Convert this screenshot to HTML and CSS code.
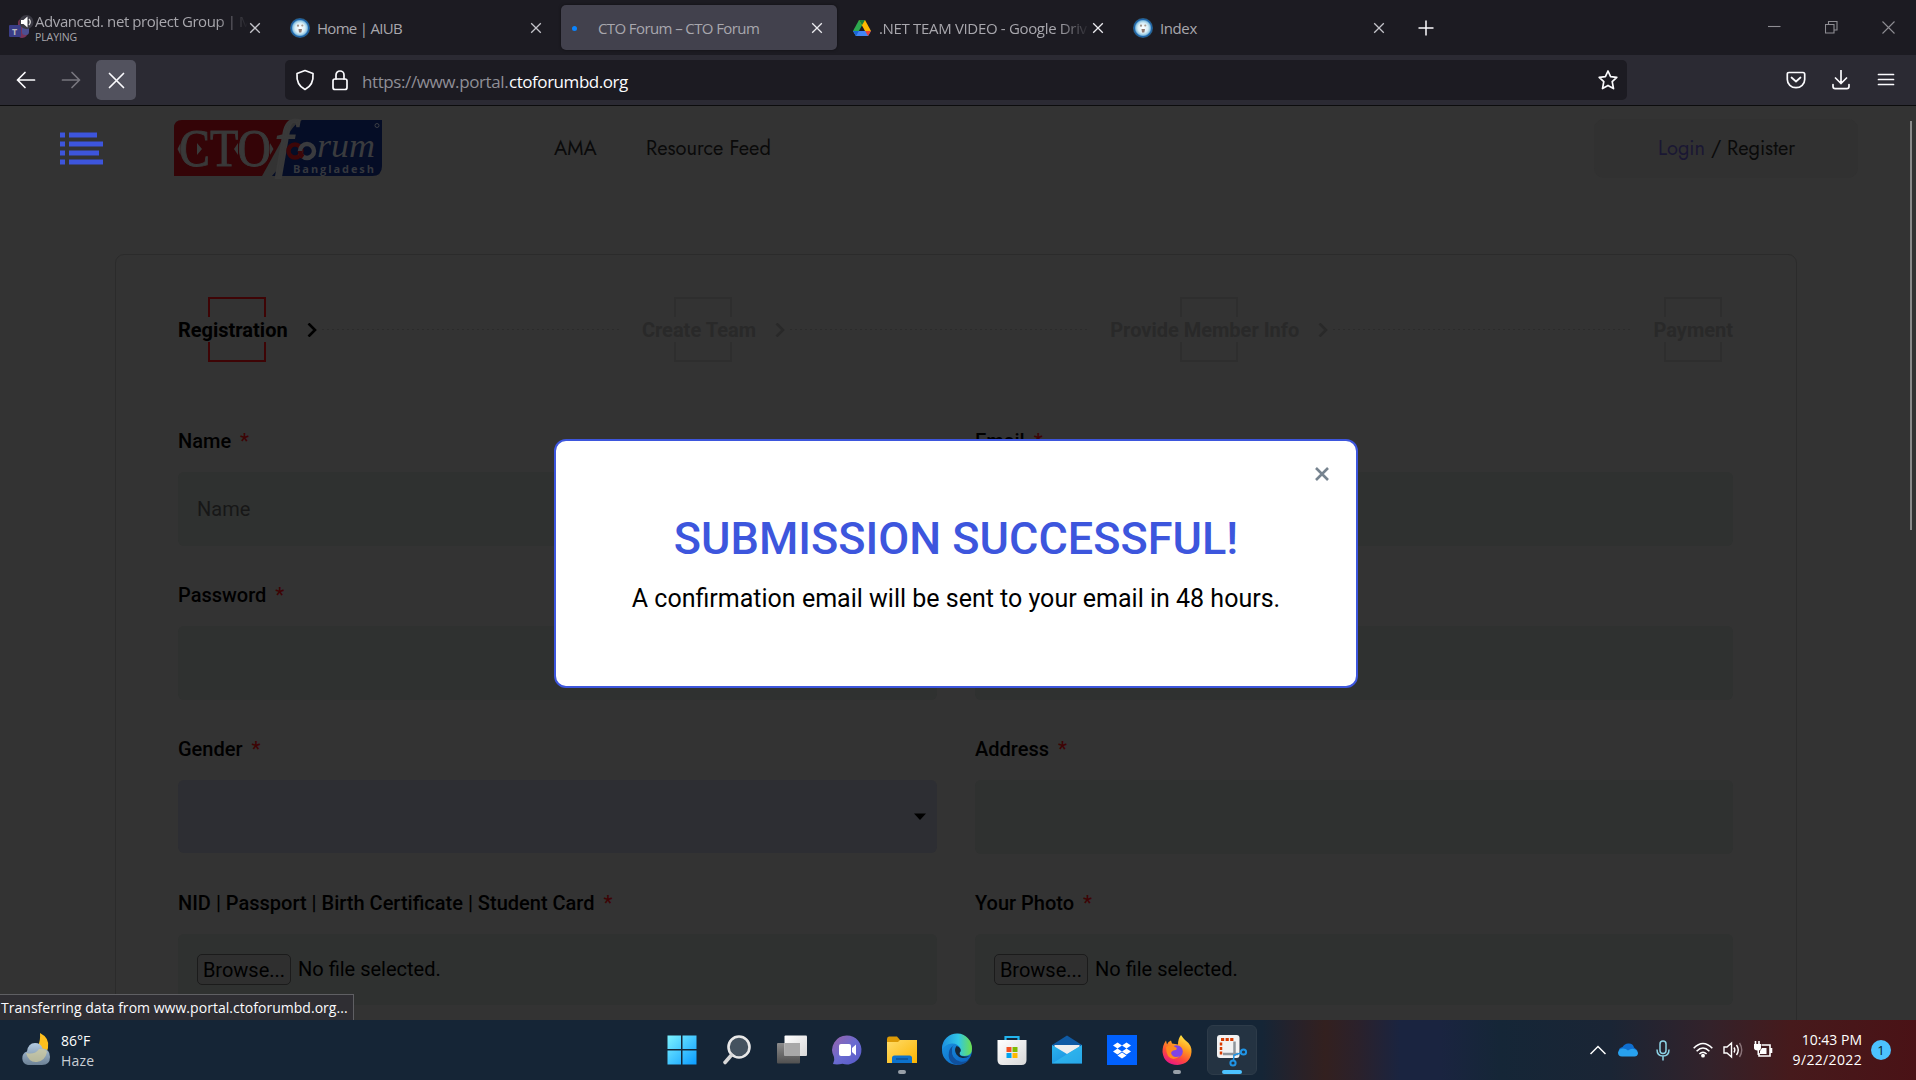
FILE: index.html
```html
<!DOCTYPE html>
<html lang="en">
<head>
<meta charset="utf-8">
<title>CTO Forum – CTO Forum</title>
<link rel="stylesheet" href="styles.css">
</head>
<body>
<svg width="0" height="0" class="defs">
  <defs>
    <radialGradient id="seal"><stop offset="0" stop-color="#fff"/><stop offset=".5" stop-color="#d9eef6"/><stop offset=".72" stop-color="#8fc6e2"/><stop offset=".85" stop-color="#1c64ad"/><stop offset="1" stop-color="#2f5d78"/></radialGradient>
    <linearGradient id="win" x1="0" y1="0" x2="1" y2="1"><stop offset="0" stop-color="#7df3ff"/><stop offset="1" stop-color="#0a9bff"/></linearGradient>
    <linearGradient id="chat" x1="0" y1="0" x2="1" y2="1"><stop offset="0" stop-color="#9a62a8"/><stop offset=".5" stop-color="#6a6bd0"/><stop offset="1" stop-color="#5558c8"/></linearGradient>
    <linearGradient id="fold" x1="0" y1="0" x2="1" y2="1"><stop offset="0" stop-color="#ffdc6a"/><stop offset="1" stop-color="#fbb400"/></linearGradient>
    <linearGradient id="edgeA" x1="0" y1="0" x2="1" y2="0"><stop offset="0" stop-color="#1c8fe0"/><stop offset=".55" stop-color="#31c6e6"/><stop offset="1" stop-color="#6ee04c"/></linearGradient>
    <linearGradient id="edgeB" x1="0" y1="0" x2="1" y2="1"><stop offset="0" stop-color="#1b9ae4"/><stop offset="1" stop-color="#0b5fc0"/></linearGradient>
    <linearGradient id="fox" x1=".8" y1="0" x2=".3" y2="1"><stop offset="0" stop-color="#fff14a"/><stop offset=".4" stop-color="#ff9a1f"/><stop offset=".7" stop-color="#ff4a3a"/><stop offset="1" stop-color="#e8148a"/></linearGradient>
    <linearGradient id="mail" x1="0" y1="0" x2="1" y2="1"><stop offset="0" stop-color="#2bb5ee"/><stop offset="1" stop-color="#1686dc"/></linearGradient>
    <linearGradient id="cloud" x1="0" y1="0" x2="0" y2="1"><stop offset="0" stop-color="#b3cbe2"/><stop offset="1" stop-color="#6d8296"/></linearGradient>
    <linearGradient id="glass" x1="0" y1="0" x2="0" y2="1"><stop offset="0" stop-color="#8c8c8c"/><stop offset="1" stop-color="#505050"/></linearGradient>
    <linearGradient id="sheet" x1="0" y1="0" x2="1" y2="1"><stop offset="0" stop-color="#fff"/><stop offset="1" stop-color="#d8d8d8"/></linearGradient>
    <symbol id="x" viewBox="0 0 12 12"><path d="M1.2 1.2 10.8 10.8M10.8 1.2 1.2 10.8" stroke="currentColor" stroke-width="1.3" fill="none"/></symbol>
    <symbol id="aiub" viewBox="0 0 20 20"><circle cx="10" cy="10" r="10" fill="url(#seal)"/><circle cx="8" cy="7.7" r="1.1" fill="#9c9189"/><circle cx="12.3" cy="7.5" r="1.1" fill="#a99c90"/><path d="M8.5 11h3.5l-.7 3.6H9z" fill="#8d7770"/></symbol>
    <symbol id="chev" viewBox="0 0 10 14"><path d="M1.5 .5 8 7l-6.500 6.500" fill="none" stroke="currentColor" stroke-width="2.600"/></symbol>
  </defs>
</svg>

<header class="tabs">
  <div class="tab first">
    <svg class="fav" width="26" height="32" viewBox="0 0 26 32"><circle cx="14" cy="11" r="4" fill="#7a3350"/><path d="M10 12h10v8a6 6 0 0 1-6 6q-4 0-4-5z" fill="#77345a"/><rect x="14" y="14" width="7" height="9" rx="3" fill="#4c4f92"/><rect x="1" y="13" width="12" height="12" rx="1" fill="#3a3d86"/><text x="4" y="22.500" class="teams">T</text><circle cx="18.500" cy="10" r="7" fill="#3b3a44"/><path d="M13 8h2.500l4-3.500v11L15.500 12H13z" fill="#fff"/><path d="M21 7q2.500 3 0 6" stroke="#ddd" stroke-width="1.300" fill="none"/></svg>
    <div class="two"><span class="ttl t1">Advanced. net project Group | M</span><span class="playing">PLAYING</span></div>
    <svg class="close"><use href="#x"/></svg>
  </div>
  <div class="tab"><svg class="fav20"><use href="#aiub"/></svg><span class="ttl t2">Home | AIUB</span><svg class="close"><use href="#x"/></svg></div>
  <div class="tab active"><i class="dot"></i><span class="ttl t3">CTO Forum – CTO Forum</span><svg class="close"><use href="#x"/></svg></div>
  <div class="tab"><svg class="fav20" viewBox="0 0 20 20"><path d="M7 2h6l-3 5.500L4 18 1 13z" fill="#2da94f"/><path d="M7 2h6l6 11h-6z" fill="#ffba00"/><path d="M7 2h6l-3 5.200z" fill="#188038"/><path d="M4.200 13H19l-3 5H4L1 13z" fill="#4285f4"/><path d="M13.200 13H19l-3 5z" fill="#ea4335"/><path d="M1 13h6l-3 5z" fill="#1a66d6"/></svg><span class="ttl t4">.NET TEAM VIDEO - Google Driv</span><svg class="close lit"><use href="#x"/></svg></div>
  <div class="tab"><svg class="fav20"><use href="#aiub"/></svg><span class="ttl t5">Index</span><svg class="close"><use href="#x"/></svg></div>
  <svg class="plus" width="16" height="16" viewBox="0 0 16 16"><path d="M8 .5v15M.5 8h15" stroke="#fbfbfe" stroke-width="1.500"/></svg>
  <div class="winctl">
    <svg width="13" height="13" viewBox="0 0 13 13"><path d="M0 5.500h12.500"/></svg>
    <svg width="13" height="13" viewBox="0 0 13 13"><path d="M.5 3.500h8.500v8.500H.5zM3.500 3.500v-3h8.500v8.500H9"/></svg>
    <svg width="13" height="13" viewBox="0 0 13 13"><path d="M.5.5l12 12M12.500.5l-12 12"/></svg>
  </div>
</header>

<nav class="toolbar">
  <svg class="back" width="20" height="18" viewBox="0 0 20 18"><path d="M9 1.500 1.500 9 9 16.500M1.500 9H18.500"/></svg>
  <svg class="fwd" width="20" height="18" viewBox="0 0 20 18"><path d="M11 1.500 18.500 9 11 16.500M18.500 9H1.500"/></svg>
  <div class="stop"><svg width="17" height="17" viewBox="0 0 17 17"><path d="M1.500 1.500l14 14M15.500 1.500l-14 14"/></svg></div>
  <div class="url">
    <svg width="20" height="22" viewBox="0 0 20 22"><path d="M10 1.500 18 4.500c.6 7-2 13-8 16-6-3-8.600-9-8-16z"/></svg>
    <svg class="lock" width="18" height="22" viewBox="0 0 18 22"><rect x="2" y="10" width="14" height="10.500" rx="2"/><path d="M5 10V6a4 4 0 0 1 8 0v4"/></svg>
    <span class="addr"><span class="dim">https://www.portal.</span><span class="host">ctoforumbd.org</span></span>
    <svg class="star" width="22" height="22" viewBox="0 0 22 22"><path d="M11 2l2.600 5.700 6.200.7-4.600 4.200 1.300 7L11 16.400 5.500 19.600l1.300-7L2.200 8.400l6.200-.7z"/></svg>
  </div>
  <div class="tools">
    <svg width="20" height="20" viewBox="0 0 20 20"><path d="M3 2.500h14q1.700 0 1.700 1.700V9.500a8.700 8.200 0 0 1-17.400 0V4.200Q1.300 2.500 3 2.500zM5.500 7.500 10 11.500l4.500-4"/></svg>
    <svg width="20" height="20" viewBox="0 0 20 20"><path d="M10 .5v13M4.500 8l5.500 5.500L15.500 8M2 14.500v2q0 2.200 2.200 2.200h11.600q2.200 0 2.200-2.200v-2"/></svg>
    <svg width="20" height="20" viewBox="0 0 20 20"><path d="M2.500 4.500h15M2.500 9.500h15M2.500 14.500h15"/></svg>
  </div>
</nav>

<main class="page">
  <div class="site-head">
    <svg class="burger" width="44" height="34" viewBox="0 0 44 34" fill="#3d55dc"><path d="M0 .5h5v5H0zM9 .5h28v5H9zM0 9.500h5v5H0zM9 9.500h34v5H9zM0 18.500h5v5H0zM9 18.500h30v5H9zM0 27.500h5v5H0zM9 27.500h34v5H9z"/></svg>
    <svg class="logo" width="208" height="56" viewBox="0 0 208 56">
      <path d="M8 0H119L88 56H0V8q0-8 8-8z" fill="#340407"/>
      <path d="M128 0H208V46q0 10-10 10H98Q108 46 110 28 114 8 128 0z" fill="#050d26"/>
      <text x="5" y="46" class="cto" textLength="92" lengthAdjust="spacingAndGlyphs">CTO</text>
      <path d="M23 23l5 6-5 6zM6.500 23l-3 6 3 6zM64 23l-4 6 4 6zM96 23l3.500 6-3.500 6z" fill="#393939"/>
      <text x="101" y="44" class="eff">f</text>
      <circle cx="121" cy="31" r="6.500" fill="none" stroke="#3c0608" stroke-width="4.500"/>
      <circle cx="133" cy="31" r="7" fill="none" stroke="#3a3b3e" stroke-width="4.500"/>
      <path d="M126 31a7 7 0 0 0 3 6" fill="none" stroke="#3c0608" stroke-width="4.500"/>
      <text x="143" y="36.500" class="rum" textLength="58" lengthAdjust="spacingAndGlyphs">rum</text>
      <text x="119" y="53" class="bd" textLength="81">Bangladesh</text>
      <circle cx="203" cy="5.500" r="2" fill="none" stroke="#3c3e45"/>
    </svg>
    <span class="link ama">AMA</span>
    <span class="link feed">Resource Feed</span>
    <div class="auth"><span class="login">Login</span><span class="slash">/</span><span class="reg">Register</span></div>
  </div>

  <section class="card">
    <div class="steps">
      <div class="step on"><span>Registration</span><svg class="chev"><use href="#chev"/></svg></div>
      <i class="dots"></i>
      <div class="step"><span>Create Team</span><svg class="chev"><use href="#chev"/></svg></div>
      <i class="dots"></i>
      <div class="step"><span>Provide Member Info</span><svg class="chev"><use href="#chev"/></svg></div>
      <i class="dots"></i>
      <div class="step"><span>Payment</span></div>
    </div>
    <div class="form">
      <div class="field"><label>Name <b>*</b></label><div class="input ph">Name</div></div>
      <div class="field"><label>Email <b>*</b></label><div class="input"></div></div>
      <div class="field"><label>Password <b>*</b></label><div class="input"></div></div>
      <div class="field"><label></label><div class="input"></div></div>
      <div class="field"><label>Gender <b>*</b></label><div class="input select"><svg width="12" height="7" viewBox="0 0 12 7"><path d="M0 .5h12L6 7z" fill="#000"/></svg></div></div>
      <div class="field"><label>Address <b>*</b></label><div class="input"></div></div>
      <div class="field"><label>NID | Passport | Birth Certificate | Student Card <b>*</b></label><div class="input file"><span class="browse">Browse...</span><span>No file selected.</span></div></div>
      <div class="field"><label>Your Photo <b>*</b></label><div class="input file"><span class="browse">Browse...</span><span>No file selected.</span></div></div>
    </div>
  </section>

  <i class="scroll"></i>
  <div class="status"><span>Transferring data from www.portal.ctoforumbd.org...</span></div>
  <div class="modal">
    <svg class="mx" width="14" height="14" viewBox="0 0 14 14"><path d="M1 1l12 12M13 1 1 13" stroke="#76838f" stroke-width="2.600"/></svg>
    <h1>SUBMISSION SUCCESSFUL!</h1>
    <p>A confirmation email will be sent to your email in 48 hours.</p>
  </div>
</main>

<footer class="taskbar">
  <div class="weather">
    <svg width="30" height="34" viewBox="0 0 30 34"><path d="M19 0q10 5 8 15-1 6-9 10-6 1-8-6 10-4 9-19z" fill="#ffc01e"/><path d="M7 32a7 7 0 0 1-1-13.500Q7 10 14 10q6 0 7.500 5.500Q29 16 29 24q0 8-8 8z" fill="url(#cloud)"/><path d="M5 20q9 2 13-4 6-1 8 3-2 9-10 10-8 1-11-9z" fill="#d8d09a" opacity=".65"/></svg>
    <div class="wt"><span class="deg">86°F</span><span class="haze">Haze</span></div>
  </div>
  <div class="apps">
    <div class="app"><svg viewBox="0 0 30 30"><path d="M.5.500H14V14H.5zM15.500.500H29.500V14H15.500zM.5 15.500H14V29.500H.5zM15.500 15.500H29.500V29.500H15.500z" fill="url(#win)"/></svg></div>
    <div class="app"><svg viewBox="0 0 30 30"><circle cx="17" cy="12" r="10.500" fill="#44525f" stroke="#e8e8e8" stroke-width="2.600"/><path d="M9.500 20 3 27.500" stroke="#d8d8d8" stroke-width="3.600" stroke-linecap="round"/></svg></div>
    <div class="app"><svg viewBox="0 0 30 30"><rect y="8" width="23" height="20.500" rx="1" fill="url(#glass)"/><rect x="7.500" y=".5" width="22.500" height="20.500" rx="1" fill="url(#sheet)"/><rect x="7.500" y="8" width="15.500" height="13" fill="#a9a9a9"/></svg></div>
    <div class="app"><svg viewBox="0 0 30 30"><path d="M15 .5a14.500 14.500 0 1 1-4.500 28.300Q5 30 1 29q2-4 1-7A14.500 14.500 0 0 1 15 .5z" fill="url(#chat)"/><rect x="7" y="9" width="12" height="12" rx="2" fill="#fff"/><path d="M20 13l4-3.500v11L20 17z" fill="#fff"/></svg></div>
    <div class="app"><svg viewBox="0 0 30 30"><path d="M0 4q0-2.500 2-2.500h8L13 5v5H0z" fill="#dc9a06"/><path d="M0 7h11l2-2h17v23H0z" fill="url(#fold)"/><path d="M5 28v-5q0-2.500 2.500-2.500h15Q25 20.500 25 23v5z" fill="#0c72cc"/><path d="M9 24h12" stroke="#0a4f93" stroke-width="1.500"/></svg><i class="mark"></i></div>
    <div class="app"><svg viewBox="0 0 30 30"><circle cx="15" cy="15" r="15" fill="url(#edgeB)"/><path d="M0 13A15 15 0 0 1 30 14q0 7-7.500 7-5 0-5-3 2-1.500 1-4Q16.500 8.500 10 8.500 3 9 0 15z" fill="url(#edgeA)"/><path d="M10 14q-1 10 8 12.500 6 1 10-3Q23.500 30 16 30 5 28 7 17q.5-4 5-7-2 1-2 4z" fill="#10509c"/><path d="M17.500 18q2-1.500 1-4-1.200-2.500-4-3-3 4 0 8.500 2 3 6 3.500 4 .2 7-2-10 2-10-3z" fill="#162636"/></svg></div>
    <div class="app"><svg viewBox="0 0 30 30"><path d="M8.500 6V2h13v4" fill="none" stroke="#22b5ee" stroke-width="2.200"/><path d="M.5 5h29v20q0 5-5 5H5.500q-5 0-5-5z" fill="url(#sheet)"/><path d="M9.500 12h5v5h-5z" fill="#f25022"/><path d="M15.500 12h5v5h-5z" fill="#7fba00"/><path d="M9.500 18h5v5h-5z" fill="#00a4ef"/><path d="M15.500 18h5v5h-5z" fill="#ffb900"/></svg></div>
    <div class="app"><svg viewBox="0 0 30 30"><path d="M0 10 15 .5 30 10v4H0z" fill="#0f5aa4"/><path d="M2.500 10h25v9h-25z" fill="#eee"/><path d="M0 10l15 9L30 10v18.500H0z" fill="url(#mail)"/><path d="M0 28.500 30 10v18.500z" fill="#36c3f2" opacity=".55"/></svg></div>
    <div class="app"><svg viewBox="0 0 30 30"><path d="M0 0h30v30H0z" fill="#0061fe"/><path d="M10.500 7.500l4.500 3-4.500 3-4.500-3zM19.500 7.500l4.500 3-4.500 3-4.500-3zM10.500 13.500l4.500 3-4.500 3-4.500-3zM19.500 13.500l4.500 3-4.500 3-4.500-3zM15 17.500l4.500 3-4.500 3-4.500-3z" fill="#fff"/></svg></div>
    <div class="app"><svg viewBox="0 0 30 30"><path d="M19 0q2 3 4 5 7 5 6.500 12-1 12-14 13Q2 29.500 .5 17 .5 10 4 5.500l1 4q1-3 4-4l1 3 6 1q0-6 3-9.500z" fill="url(#fox)"/><circle cx="14.500" cy="16.500" r="6.300" fill="#8044e6"/><path d="M4 12q6-4 9 0 3 1 1 3-4 0-5 3 2 6 9 3-7 6-12 0-2-4-2-9z" fill="#ff8a1e"/></svg><i class="mark"></i></div>
    <div class="app sel"><svg viewBox="0 0 30 30"><rect y="0" width="22.500" height="23" rx="3" fill="#f2f2f2"/><path d="M4 4.500h12.500" fill="none" stroke="#d83b01" stroke-width="3" stroke-dasharray="3.200 1.400"/><path d="M4 7.500v12" fill="none" stroke="#d83b01" stroke-width="2.500" stroke-dasharray="3 1.500"/><path d="M17.500 6.500V21M6 19h15" stroke="#8e959b" stroke-width="2.500"/><circle cx="26.500" cy="17" r="2.600" fill="none" stroke="#2095e6" stroke-width="2"/><circle cx="16" cy="28" r="2.600" fill="none" stroke="#2095e6" stroke-width="2"/><path d="M24 18l-7 2-.5 5.500" fill="none" stroke="#2095e6" stroke-width="1.500"/></svg><i class="mark blue"></i></div>
  </div>
  <div class="tray">
    <svg class="up" width="16" height="10" viewBox="0 0 16 10"><path d="M.5 9 8 1.500 15.500 9" fill="none" stroke="#fff" stroke-width="1.500"/></svg>
    <svg class="od" width="20" height="14" viewBox="0 0 20 14"><path d="M1 9Q0 5 4.500 4 7 0 11 .5q4 0 5 4l3.500 3-8 3z" fill="#0f6fd0"/><path d="M4 13.500q-4 0-4-4Q1 5.500 5 5.500q3 0 5 2 3-2.500 6-1.500 4 1 4 4.500-.5 3-3.500 3z" fill="#28a1ee"/></svg>
    <svg class="mic" width="14" height="21" viewBox="0 0 14 21"><g fill="none" stroke="#8cd3e6" stroke-width="1.500"><rect x="4" y="1" width="6" height="12.500" rx="3"/><path d="M1 9.500q0 6.500 6 6.500t6-6.500M7 16v4.500"/></g></svg>
    <svg class="wifi" width="20" height="16" viewBox="0 0 20 16"><g fill="none" stroke="#fff" stroke-width="1.600"><path d="M.7 6.200q9.300-9.500 18.600 0M3.600 9.200q6.400-6.400 12.800 0M6.400 12q3.600-3.600 7.200 0"/></g><circle cx="10" cy="13.700" r="1.900" fill="#fff"/></svg>
    <svg class="vol" width="20" height="18" viewBox="0 0 20 18"><g fill="none" stroke="#fff" stroke-width="1.400"><path d="M1 6h3l4.500-4v14L4 12H1zM11 6.500q1.700 2.500 0 5M13.500 4q3.500 5 0 10"/><path d="M16.500 2q4.500 7 0 14" stroke="#8a7378"/></g></svg>
    <svg class="bat" width="21" height="18" viewBox="0 0 21 18"><path d="M1 3h7v4q0 2-2 2.500V14H4.500V9.500Q1 9 1 7z" fill="#fff"/><path d="M2.500 0v3M6 0v3M8.500 4H17v11H6v-3M18.500 7v5" stroke="#fff" stroke-width="1.600" fill="none"/><path d="M9 7h4.500v6H7v-3z" fill="#fff"/></svg>
    <div class="clock"><span class="time">10:43 PM</span><span class="date">9/22/2022</span></div>
    <span class="badge">1</span>
  </div>
</footer>
</body>
</html>
```
FILE: styles.css
```css
*, *::before, *::after { box-sizing: border-box; }
body {
  margin: 0;
  width: 1916px;
  height: 1080px;
  overflow: hidden;
  display: flex;
  flex-direction: column;
  background: #333;
  font-family: Roboto, "Liberation Sans", sans-serif;
}
svg { display: block; flex: none; }
.defs { position: absolute; }

/* tab strip */
.tabs {
  height: 55px;
  flex: none;
  display: flex;
  align-items: center;
  gap: 5px;
  background: #1c1b22;
  font-family: "Open Sans", "Noto Sans", sans-serif;
  color: #a8a7ad;
}
.tab {
  width: 276px;
  height: 45px;
  flex: none;
  display: flex;
  align-items: center;
  padding: 1px 14px 0 10px;
  border-radius: 5px;
}
.tab.first { margin-left: -1px; padding-left: 9px; }
.tab.active { background: #42414d; box-shadow: 0 0 3px rgba(0,0,0,.5); }
.fav { margin-right: 1px; }
.fav20 { width: 20px; height: 20px; margin-right: 7px; }
.dot { width: 5px; height: 5px; border-radius: 50%; background: #0a84ff; margin: 0 21px 0 1px; }
.ttl { font-size: 15px; line-height: 20px; white-space: nowrap; }
.t1 { letter-spacing: -.42px; width: 213px; }
.t2 { letter-spacing: -.7px; }
.t3 { letter-spacing: -.6px; }
.t4 { letter-spacing: -.33px; width: 211px; }
.t5 { letter-spacing: -.4px; }
.t1, .t4 {
  -webkit-mask-image: linear-gradient(90deg, #000 85%, transparent);
  mask-image: linear-gradient(90deg, #000 85%, transparent);
}
.two { display: flex; flex-direction: column; }
.two .ttl { line-height: 17px; }
.playing { font-size: 10.5px; line-height: 14px; letter-spacing: -.1px; }
.teams { font: bold 9px "Open Sans", sans-serif; fill: #bbb; }
.close { width: 12px; height: 12px; margin-left: auto; color: #c4c4ca; }
.close.lit, .active .close { color: #ececf0; }
.plus { margin-left: 14px; }
.winctl { margin-left: auto; margin-right: 21px; display: flex; gap: 44px; }
.winctl path { fill: none; stroke: #8e8d93; stroke-width: 1.1; }

/* navigation toolbar */
.toolbar {
  height: 51px;
  flex: none;
  display: flex;
  align-items: center;
  background: #2b2a33;
  border-bottom: 1px solid #0c0c0d;
  padding: 0 20px 0 16px;
}
.toolbar svg { fill: none; stroke: #fbfbfe; stroke-width: 1.7; stroke-linejoin: round; stroke-linecap: round; }
.toolbar .fwd { margin-left: 25px; stroke: #77767e; }
.stop {
  width: 40px;
  height: 40px;
  margin-left: 15px;
  border-radius: 5px;
  background: #52525e;
  display: grid;
  place-items: center;
}
.url {
  width: 1342px;
  height: 40px;
  margin-left: 149px;
  padding: 0 8px 0 10px;
  border-radius: 5px;
  background: #1c1b22;
  display: flex;
  align-items: center;
}
.lock { margin: 0 13px 0 16px; }
.addr { font: 17px/24px "Open Sans", "Noto Sans", sans-serif; display: flex; padding-top: 3px; white-space: nowrap; }
.dim { color: #8f8e96; letter-spacing: -.4px; width: 147px; }
.host { color: #fbfbfe; letter-spacing: -.45px; }
.star { margin-left: auto; }
.tools { margin-left: auto; display: flex; gap: 25px; }

/* page content */
.page { height: 914px; flex: none; position: relative; overflow: hidden; background: #333; }
.site-head { height: 85px; display: flex; align-items: center; padding: 0 58px 0 60px; font: 20px/28px Jost, Lato, sans-serif; color: #0a0a0a; }
.logo { margin: -1px 0 0 70px; overflow: visible; }
.cto { font: 53px "Liberation Serif", serif; fill: #393939; stroke: #393939; stroke-width: 1; }
.eff { font: italic 63px "Liberation Serif", serif; fill: #393939; stroke: #393939; stroke-width: 2; }
.rum { font: italic 34px "Liberation Serif", serif; fill: #3a3b3e; }
.bd { font: bold 11px "Open Sans", sans-serif; fill: #36383e; }
.ama { margin-left: 172px; width: 92px; letter-spacing: 0; }
.feed { white-space: nowrap; }
.auth { margin-left: auto; width: 264px; height: 59px; border-radius: 10px; background: #313131; display: flex; align-items: center; padding-left: 64px; }
.login { width: 53px; color: #1a1733; }
.slash { width: 16px; }

.card {
  margin: 63px 0 0 115px;
  width: 1682px;
  height: 900px;
  border: 1px solid #2b2b2b;
  border-radius: 9px;
  padding: 42px 63px 0 62px;
}
.steps { display: flex; align-items: center; height: 65px; font-size: 20px; font-weight: 700; }
.step { position: relative; height: 65px; display: flex; align-items: center; color: #292929; white-space: nowrap; }
.step.on { color: #000; }
.step span { position: relative; }
.step::before, .step::after {
  content: "";
  position: absolute;
  left: calc(50% - 39px);
  width: 58px;
  height: 20px;
  border: 2px solid #2e2e2e;
}
.step::before { top: 0; border-bottom: 0; }
.step::after { bottom: 0; border-top: 0; }
.step:last-child::before, .step:last-child::after { left: calc(50% - 29px); }
.step.on::before, .step.on::after { border-color: #3e0405; }
.chev { width: 10px; height: 14px; margin-left: 19px; }
.dots { flex: 1; height: 1px; margin: 0 20px 0 5px; background: repeating-linear-gradient(90deg, #2b2b2b 0 2px, transparent 2px 5px); }

.form { display: grid; grid-template-columns: 759px 758px; gap: 0 38px; margin-top: 62px; }
.field { height: 154px; }
label { display: block; height: 48px; line-height: 34px; font-size: 20px; font-weight: 500; color: #000; }
label b { color: #3e0405; margin-left: 4px; font-weight: 500; }
.input { height: 74px; border-radius: 6px; background: #2f3130; font-size: 20px; display: flex; align-items: center; padding: 0 19px; }
.ph { color: #171717; }
.select { height: 73px; background: #2d2e33; justify-content: flex-end; padding-right: 11px; padding-bottom: 1px; }
.file { height: 71px; color: #000; gap: 7px; padding-bottom: 1px; }
.browse { border: 1px solid #1b1b1b; border-radius: 5px; height: 31px; line-height: 30px; width: 94px; text-align: center; background: #2f2f2f; }

.scroll { position: absolute; left: 1910px; top: 15px; width: 2px; height: 409px; background: #8a8a8a; }
.status {
  position: absolute;
  left: 0;
  bottom: 0;
  width: 354px;
  height: 26px;
  background: #2f2e33;
  border: solid #5f5f63;
  border-width: 1px 1px 0 0;
  color: #fbfbfe;
  font: 14px/26px "Open Sans", "Noto Sans", sans-serif;
  letter-spacing: .03px;
  padding-left: 1px;
  white-space: nowrap;
}
.modal {
  position: absolute;
  left: 554px;
  top: 333px;
  width: 804px;
  height: 249px;
  border: 2px solid #3d56dd;
  border-radius: 12px;
  background: #fff;
  text-align: center;
}
.mx { position: absolute; right: 27px; top: 26px; }
.modal h1 { margin: 68px 0 0; font-size: 45px; line-height: 60px; font-weight: 500; color: #3d56dd; }
.modal p { margin: 10px 0 0; font-size: 25px; line-height: 40px; color: #000; }

/* taskbar */
.taskbar {
  height: 60px;
  flex: none;
  display: flex;
  align-items: center;
  font-family: "Open Sans", "Noto Sans", sans-serif;
  color: #fff;
  background: linear-gradient(90deg, #152536 0, #152536 1262px, #24222c 1290px, #33201f 1325px, #2a212c 1360px, #1a2440 1400px, #1a2440 1440px, #152637 1500px, #1a2535 1610px, #33222a 1710px, #461a1c 1790px, #4a1216 1916px);
}
.weather { width: 654px; padding-left: 21px; display: flex; align-items: center; gap: 10px; }
.wt { display: flex; flex-direction: column; font-size: 14px; line-height: 20px; padding-top: 1px; }
.deg { letter-spacing: 0; }
.haze { color: #c8ced4; letter-spacing: .2px; }
.apps { display: flex; }
.app { width: 55px; height: 60px; position: relative; display: grid; place-items: center; }
.app > svg { width: 30px; height: 30px; overflow: visible; position: relative; }
.app.sel { width: 50px; height: 50px; margin: 5px 0 0 3px; background: #243342; border: 1px solid #2d3b49; border-radius: 6px; }
.mark { position: absolute; left: 50%; bottom: 6px; width: 8px; height: 4px; margin-left: -4px; border-radius: 2px; background: #98a0a8; }
.mark.blue { width: 20px; margin-left: -10px; bottom: 0; background: #4cc2ff; }
.tray { margin-left: auto; padding-right: 25px; display: flex; align-items: center; }
.od { margin-left: 12px; }
.mic { margin-left: 18px; }
.wifi { margin-left: 23px; }
.vol { margin-left: 10px; }
.bat { margin-left: 10px; }
.clock { width: 88px; display: flex; flex-direction: column; align-items: flex-end; font-size: 14px; line-height: 20px; }
.time { letter-spacing: 0; }
.date { letter-spacing: .35px; }
.badge { width: 20px; height: 20px; margin-left: 9px; border-radius: 50%; background: #4cc2ff; color: #0a1a28; font-size: 13px; line-height: 20px; text-align: center; }
```
